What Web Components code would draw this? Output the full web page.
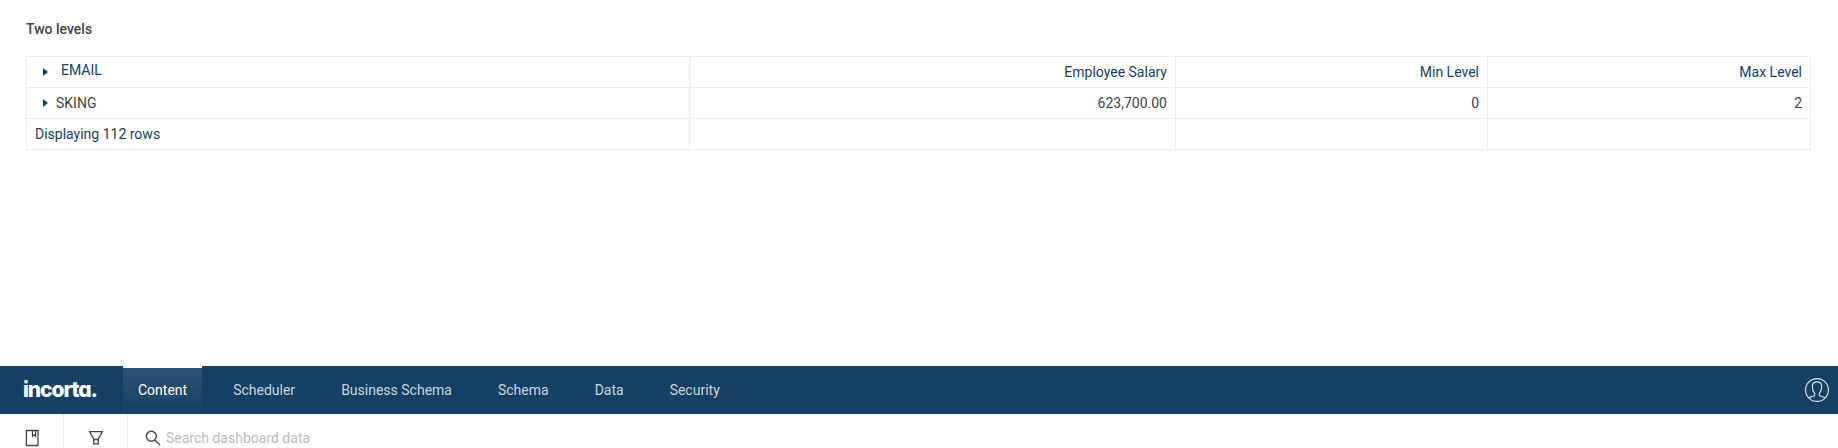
<!DOCTYPE html>
<html lang="en">
<head>
<meta charset="utf-8">
<title>Two levels</title>
<style>
html,body{height:100%}
body{margin:0;background:#fff;font:14px/20px Roboto,sans-serif;color:#3f4448;overflow:hidden}
</style>
</head>
<body>
<dashboard-page></dashboard-page>
<script>
const define = (name, html) => customElements.define(name, class extends HTMLElement {
  constructor(){ super(); this.attachShadow({mode:'open'}).innerHTML = html; }
});

define('tree-caret', `<style>:host{display:block;width:5px;height:8px}svg{display:block}</style>
<svg width="5" height="8" viewBox="0 0 5 8"><path d="M0 0L5 4L0 8Z" fill="#174164"/></svg>`);

define('grid-cell', `<style>
:host{display:flex;box-sizing:border-box;height:31px;padding:5px 8px 0;border-right:1px solid #ebecf0;border-bottom:1px solid #ebecf0;justify-content:flex-end;white-space:nowrap}
:host([start]){justify-content:flex-start}
:host([head]){color:#174164}
</style><slot></slot>`);

define('level-table', `<style>
:host{display:grid;grid-template-columns:663px 486px 312px 323px;border-left:1px solid #ebecf0;border-top:1px solid #ebecf0;width:1784px}
.email{margin:-2px 0 0 13px}
.sking{margin-left:8px}
.c1{margin:6px 0 0 8px}
</style>
<grid-cell start head><tree-caret class="c1"></tree-caret><span class="email">EMAIL</span></grid-cell>
<grid-cell head>Employee Salary</grid-cell><grid-cell head>Min Level</grid-cell><grid-cell head>Max Level</grid-cell>
<grid-cell start><tree-caret class="c1"></tree-caret><span class="sking">SKING</span></grid-cell>
<grid-cell>623,700.00</grid-cell><grid-cell>0</grid-cell><grid-cell>2</grid-cell>
<grid-cell start head>Displaying 112 rows</grid-cell><grid-cell></grid-cell><grid-cell></grid-cell><grid-cell></grid-cell>`);

define('nav-tab', `<style>
:host{display:block;box-sizing:border-box;height:48px;padding:14px 15px 0;color:#c8d3dc;white-space:nowrap}
:host([active]){color:#fff;border-top:2px solid #fff;padding-top:12px;background:linear-gradient(#2d5275,#174164)}
</style><slot></slot>`);

define('brand-logo', `<style>
:host{display:block;width:99px;box-sizing:border-box;height:48px;padding:13px 0 0 23px;color:#fff;font:800 21px/22px Inter,sans-serif;font-feature-settings:"cv11";letter-spacing:-1.1px;white-space:nowrap}
</style>incorta.`);

define('user-avatar', `<style>:host{display:block;width:24px;height:24px}svg{display:block}</style>
<svg width="24" height="24" viewBox="0 0 24 24" fill="none" stroke="#dfe6ec" stroke-width="1.1"><circle cx="12" cy="12" r="11.4"/><path d="M4 20C5 18.3 9.7 18.6 9.7 17V15.4C7.9 13.7 7.3 11.5 7.3 8.6C7.3 5.2 9 3.9 12 3.9S16.7 5.2 16.7 8.6C16.7 11.5 16.1 13.7 14.3 15.4V17C14.3 18.6 19 18.3 20 20"/></svg>`);

define('top-nav', `<style>
:host{display:flex;height:48px;background:#174164;align-items:flex-start}
nav{display:flex;gap:16px;margin-left:24px}
user-avatar{margin:12px 9px 0 auto}
</style><brand-logo></brand-logo><nav><nav-tab active>Content</nav-tab><nav-tab>Scheduler</nav-tab><nav-tab>Business Schema</nav-tab><nav-tab>Schema</nav-tab><nav-tab>Data</nav-tab><nav-tab>Security</nav-tab></nav><user-avatar></user-avatar>`);

define('tool-bar', `<style>
:host{display:flex;height:34px;overflow:hidden}
.b{box-sizing:border-box;height:48px;width:64px;border-right:1px solid #ebebeb;flex:none}
svg{display:block}
.search{display:flex;padding:16px 0 0 17px}
.ph{margin:-2px 0 0 5px;color:#b9bbbd}
</style>
<div class="b"><svg width="63" height="34" fill="none" stroke="#3f4448" stroke-width="1.3"><path d="M26.4 16.5H38V31.5H26.4ZM32.5 16.5V22.2L34.1 20.9L35.6 22.2V16.5"/></svg></div>
<div class="b"><svg width="63" height="34" fill="none" stroke="#3f4448" stroke-width="1.3"><path d="M25.7 17.6H38.3L34.3 25V29.8H29.7V25ZM29.7 25.5H34.3"/></svg></div>
<div class="search"><svg width="16" height="16" fill="none" stroke="#3f4448" stroke-width="1.4"><circle cx="6.3" cy="6.3" r="5"/><path d="M9.9 9.9L15 15"/></svg><span class="ph">Search dashboard data</span></div>`);

define('dashboard-page', `<style>
:host{display:flex;flex-direction:column;height:448px}
main{height:366px;padding:19px 0 0 26px;box-sizing:border-box}
h1{font:500 14px/20px Roboto,sans-serif;margin:0 0 17px}
</style><main><h1>Two levels</h1><level-table></level-table></main><top-nav></top-nav><tool-bar></tool-bar>`);
</script>
</body>
</html>
